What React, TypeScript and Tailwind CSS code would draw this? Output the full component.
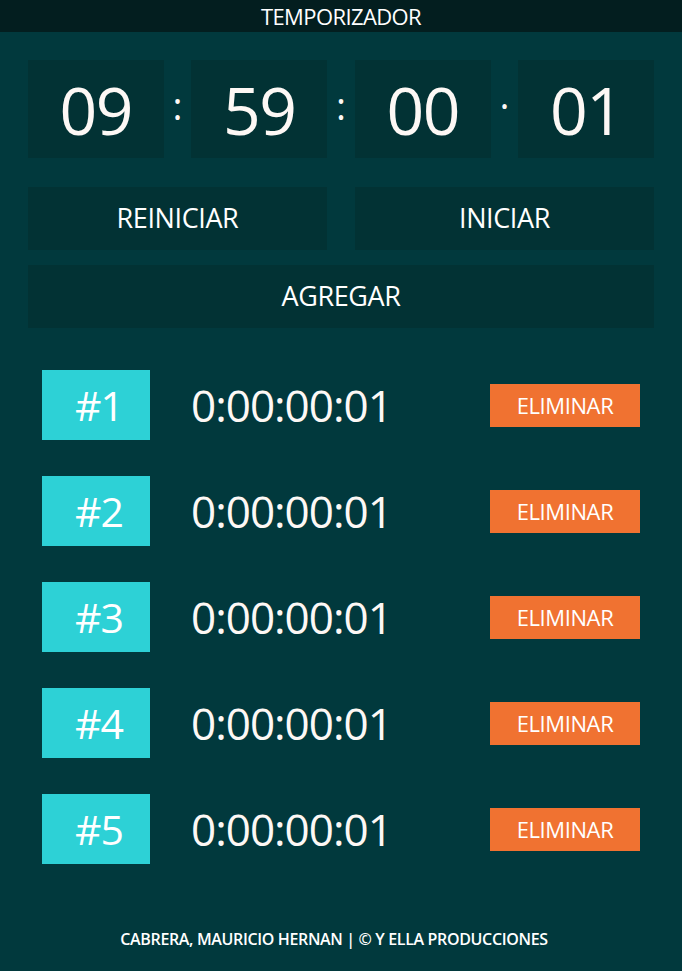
import React from "react";

const font = { fontFamily: '"Open Sans", "Noto Sans", sans-serif' };

function Box({ v }: { v: string }) {
  return (
    <div className="w-[136px] h-[98px] bg-[#023234] flex items-center justify-center text-[66px] leading-none text-[#fdf8f5] tracking-[-1.5px]">
      {v}
    </div>
  );
}

function Sep({ c }: { c: string }) {
  return (
    <div className="w-[28px] flex items-center justify-center text-[38px] leading-none text-[#fdf8f5] pb-[8px]">
      {c}
    </div>
  );
}

export default function App() {
  const rows = [1, 2, 3, 4, 5];
  return (
    <div className="w-[682px] h-[971px] bg-[#01393d] flex flex-col text-white" style={font}>
      <div className="h-8 bg-[#031e1f] flex items-center justify-center text-[22px] tracking-[-0.6px] leading-none">
        TEMPORIZADOR
      </div>
      <div className="px-7 pt-7">
        <div className="flex">
          <Box v="09" />
          <Sep c=":" />
          <Box v="59" />
          <Sep c=":" />
          <Box v="00" />
          <Sep c="·" />
          <Box v="01" />
        </div>
        <div className="flex gap-7 mt-[29px]">
          <button className="w-[299px] h-[63px] bg-[#023234] text-[27px] tracking-[-0.4px] text-white">REINICIAR</button>
          <button className="w-[299px] h-[63px] bg-[#023234] text-[27px] tracking-[-0.4px] text-white">INICIAR</button>
        </div>
        <button className="w-full h-[63px] mt-[15px] bg-[#023234] text-[27px] tracking-[-0.4px] text-white">AGREGAR</button>
        <div className="flex flex-col gap-9 mt-[42px] px-[14px]">
          {rows.map((n) => (
            <div key={n} className="flex items-center h-[70px]">
              <div className="w-[108px] h-[70px] bg-[#2dd1d6] flex items-center justify-center pl-[6px] text-[41px] leading-none tracking-[-1px]">
                #{n}
              </div>
              <div className="ml-[41px] text-[44px] leading-none tracking-[-1px] text-[#fdf8f5]">0:00:00:01</div>
              <div className="flex-1" />
              <button className="w-[150px] h-[43px] bg-[#f07231] text-[22px] text-white tracking-[-0.4px]">ELIMINAR</button>
            </div>
          ))}
        </div>
      </div>
      <div className="mt-[63px] pr-[14px] text-center text-[16px] font-semibold tracking-[-0.35px] leading-6">
        CABRERA, MAURICIO HERNAN | © Y ELLA PRODUCCIONES
      </div>
    </div>
  );
}
